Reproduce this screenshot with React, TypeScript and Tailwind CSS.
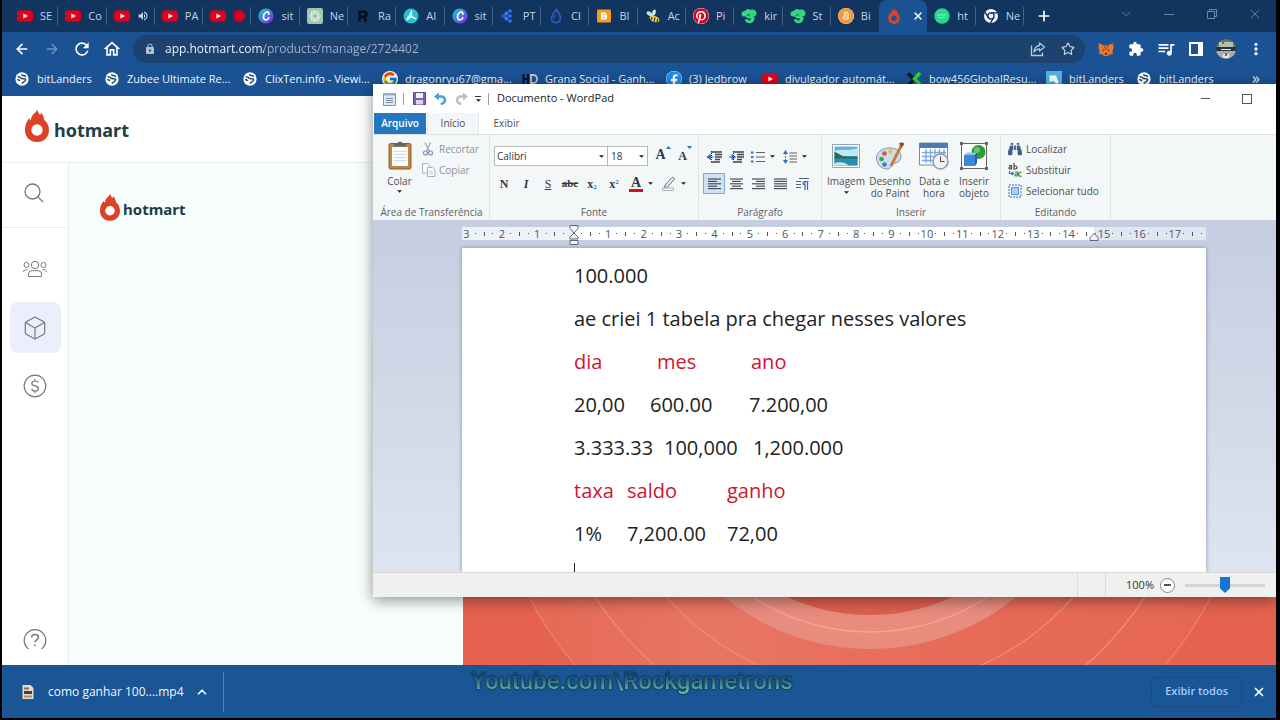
import type { ReactNode } from "react";
import clsx from "clsx";
import {
  ArrowLeft,
  ArrowRight,
  Box,
  ChevronDown,
  ChevronUp,
  MoreVertical,
  Plus,
  Star,
  X,
} from "lucide-react";
import {
  MdExtension,
  MdLock,
  MdOutlineHome,
  MdQueueMusic,
  MdRefresh,
  MdVolumeUp,
} from "react-icons/md";
import { FaBitcoin, FaBinoculars, FaFacebook, FaPinterest } from "react-icons/fa";
import { FcGoogle } from "react-icons/fc";

/* ---------- site icons ---------- */

function YoutubeIcon() {
  return (
    <svg viewBox="0 0 16 16" className="size-4 shrink-0">
      <rect y="2.5" width="16" height="11" rx="3" fill="#e3001b" />
      <path d="M6.3 5.4v5.2L11 8z" fill="#fff" />
    </svg>
  );
}

function CanvaIcon() {
  return (
    <svg viewBox="0 0 16 16" className="size-4 shrink-0">
      <defs>
        <linearGradient id="canva" x1="0" y1="0" x2="1" y2="1">
          <stop offset="0.1" stopColor="#19c5cf" />
          <stop offset="0.9" stopColor="#7d2ae8" />
        </linearGradient>
      </defs>
      <circle cx="8" cy="8" r="7.6" fill="url(#canva)" />
      <path
        d="M10.8 6.200c.3-1.500-.6-2.400-1.900-2.200-2 .3-3.500 2.800-3.400 5 .1 1.900 1.100 3 2.500 2.900 1.200-.1 2.200-1 2.800-2.100"
        fill="none"
        stroke="#fff"
        strokeWidth="1.700"
        strokeLinecap="round"
      />
    </svg>
  );
}

function ChatIcon() {
  return (
    <svg viewBox="0 0 16 16" className="size-4 shrink-0">
      <rect width="16" height="16" rx="2" fill="#9fc4ab" />
      <g fill="none" stroke="#dcefe0" strokeWidth=".900">
        <ellipse cx="8" cy="8" rx="5.500" ry="2.800" />
        <ellipse cx="8" cy="8" rx="5.500" ry="2.800" transform="rotate(60 8 8)" />
        <ellipse cx="8" cy="8" rx="5.500" ry="2.800" transform="rotate(120 8 8)" />
      </g>
    </svg>
  );
}

function LetterRIcon() {
  return (
    <svg viewBox="0 0 16 16" className="size-4 shrink-0">
      <g fill="none" stroke="#04101f" strokeWidth="2.600">
        <path d="M4.500 13.500V3.700h4.300a2.600 2.600 0 0 1 0 5.200H4.500" />
        <path d="M8.500 9l3 4.500" />
      </g>
    </svg>
  );
}

function TealIcon() {
  return (
    <svg viewBox="0 0 16 16" className="size-4 shrink-0">
      <circle cx="8" cy="8" r="7.500" fill="#22c3d6" />
      <path d="M8.500 2.500v6.200L3.500 12M8.500 8.700l4.200 2.100M8.500 3.500c-1 3-2.500 5.500-4.500 7.500" fill="none" stroke="#fff" strokeWidth="1.400" />
    </svg>
  );
}

function DotsIcon() {
  return (
    <svg viewBox="0 0 16 16" className="size-4 shrink-0">
      <path d="M1 8l5-4.500v9z" fill="#2b55d8" />
      <g fill="#3f74f5">
        <circle cx="6.500" cy="5.500" r="1.900" />
        <circle cx="6.500" cy="10.500" r="1.900" />
        <circle cx="10" cy="3" r="1.800" />
        <circle cx="10" cy="8" r="1.800" />
        <circle cx="10" cy="13" r="1.800" />
      </g>
    </svg>
  );
}

function DropIcon() {
  return (
    <svg viewBox="0 0 16 16" className="size-4 shrink-0">
      <path d="M8.500 1.500C6 5 3.500 7.400 3.500 10.200a4.500 4.500 0 0 0 9 0C12.500 7.400 10.500 5 8.500 1.500z" fill="none" stroke="#2a5cc4" strokeWidth="1.700" />
      <path d="M7.500 7c-1 1.200-2 2.200-2 3.500" fill="none" stroke="#2a5cc4" strokeWidth="1.300" />
    </svg>
  );
}

function BloggerIcon() {
  return (
    <svg viewBox="0 0 16 16" className="size-4 shrink-0">
      <rect x="1" y="1.500" width="14" height="13" rx="1.500" fill="#f39c26" />
      <path d="M5 4.500h3.500a1.800 1.800 0 0 1 1.700 2.300h.8v2.700a2 2 0 0 1-2 2H5z" fill="#fff" />
      <path d="M6.800 6.500h1.700M6.800 9.400h2.500" stroke="#f39c26" strokeWidth="1" />
    </svg>
  );
}

function BeeIcon() {
  return (
    <svg viewBox="0 0 16 16" className="size-4 shrink-0">
      <ellipse cx="5" cy="6" rx="3.800" ry="2" transform="rotate(30 5 6)" fill="#bfe0ee" />
      <ellipse cx="9" cy="4.500" rx="1.700" ry="3" transform="rotate(15 9 4.500)" fill="#d9eef5" />
      <ellipse cx="9.500" cy="11" rx="5" ry="3" transform="rotate(20 9.500 11)" fill="#f0d24a" />
      <path d="M7 9l-1 3M10 9.500l-1 4M12.800 11l-1 3" stroke="#2b3a3c" strokeWidth="1.200" />
    </svg>
  );
}

function GreenCloudIcon() {
  return (
    <svg viewBox="0 0 16 16" className="size-4 shrink-0">
      <path
        d="M.5 6C.5 3.500 2.500 2.500 4 3 5 1 8 .3 9.500 2 12.600.7 15.700 2.800 15.500 5.800c-.2 2-2 2.700-3.500 2.500l1.600 1c-.1 3.800-1.700 6-5 6-2.800 0-4.600-1.500-4.700-4h3.100c.2 1 .7 1.400 1.500 1.300 1-.1 1.400-1.100 1.300-2.300-1.700.4-4.300-.2-4.800-1.900C3 8.800.5 8.500.5 6z"
        fill="#37d67c"
      />
      <path d="M6 8c.5-1.200 2-1.500 3-1" fill="none" stroke="#12355f" strokeWidth=".900" />
    </svg>
  );
}

function FlameIcon({ className, hole = "#fff" }: { className?: string; hole?: string }) {
  return (
    <svg viewBox="0 0 24 33" className={clsx("shrink-0", className)}>
      <path
        d="M12.200 0c.4 3 1.600 4.600 3.100 6 .5-1 .6-1.700.5-2.700 2.300 2.500 2.900 5 3.600 7.600 2.600 2.300 4.600 5.600 4.600 10C24 28 18.900 33 12 33S0 28 0 21.200C0 15.500 1.800 12.600 4.400 9.300c.3 1 .7 1.600 1.400 2C6.200 7 8.500 4.800 10.300 3.500 11.300 2.700 11.900 1.600 12.200 0z"
        fill="#dc4228"
      />
      <circle cx="12" cy="21" r="5.700" fill={hole} />
    </svg>
  );
}

function MessageIcon() {
  return (
    <svg viewBox="0 0 16 16" className="size-4 shrink-0">
      <circle cx="8" cy="8" r="7.700" fill="#27d98b" />
      <path d="M3.500 7h9M4.500 9.500h7" stroke="#c9f7e0" strokeWidth="1" strokeDasharray="2 1" />
    </svg>
  );
}

function ChromeIcon() {
  return (
    <svg viewBox="0 0 16 16" className="size-4 shrink-0">
      <circle cx="8" cy="8" r="7" fill="#f1f5fa" />
      <circle cx="8" cy="8" r="3.100" fill="#f1f5fa" stroke="#12355f" strokeWidth="1.300" />
      <path d="M8 4.900h6.300M5.300 9.600L2.100 4.200M10.700 9.600l-3.200 5.300" stroke="#12355f" strokeWidth="1.300" />
    </svg>
  );
}

function GlobeIcon() {
  return (
    <svg viewBox="0 0 16 16" className="size-[14px] shrink-0">
      <circle cx="8" cy="8" r="7.600" fill="#fff" />
      <path d="M3 5.500c2-.2 3 .3 3.500 1.300s2.500 1 3.800.9c1.300-.2 2.200.6 1.700 1.700-.6 1.500-2.500 2-4.300 3.600M8 2.300c-.6 1 .5 1.800 1.500 1.800s2 .4 2.900 1.400M2.500 8.500c1 .3 2.500.5 3 1.700" fill="none" stroke="#1d4a80" strokeWidth="1.700" />
    </svg>
  );
}

function HdIcon() {
  return (
    <svg viewBox="0 0 16 16" className="size-4 shrink-0">
      <path d="M1.500 3v10M6 3v10M1.500 8H6" stroke="#0a1526" strokeWidth="2.200" />
      <path d="M9 4v8h2.200a4 4 0 0 0 0-8z" fill="none" stroke="#b7c7da" strokeWidth="1.800" />
    </svg>
  );
}

function CrossIcon() {
  return (
    <svg viewBox="0 0 16 16" className="size-4 shrink-0">
      <path d="M2 2.500L8 8l-5 6" fill="none" stroke="#081a16" strokeWidth="3.500" />
      <path d="M14 2L8.500 8l5.500 5" fill="none" stroke="#2fd04b" strokeWidth="3.500" />
    </svg>
  );
}

function CursorIcon() {
  return (
    <svg viewBox="0 0 16 16" className="size-4 shrink-0">
      <rect width="16" height="16" fill="#4fb3e4" />
      <path d="M3.500 4.500h7v2L13 11l-2.500 2L7.500 10 3.500 11z" fill="#fff" />
    </svg>
  );
}

function FoxIcon() {
  return (
    <svg viewBox="0 0 16 16" className="size-4">
      <path d="M1 2l5 2.500h4L15 2l.5 5-1 3 .5 3-3.500.5L10 15H6l-1.500-1.500L1 13l.5-3-1-3z" fill="#e8792b" />
      <path d="M5 8l1.500 1.500L4.500 10zM11 8L9.500 9.500l2 .5zM6.500 12h3l-.5 1.500H7z" fill="#4a2b1d" />
      <path d="M6 4.500L8 9l2-4.500" fill="none" stroke="#a54a17" />
    </svg>
  );
}

type Tab = { icon: ReactNode; title?: string; extra?: ReactNode; active?: boolean };

const tabs: Tab[] = [
  { icon: <YoutubeIcon />, title: "SE" },
  { icon: <YoutubeIcon />, title: "Co" },
  { icon: <YoutubeIcon />, extra: <MdVolumeUp className="size-3" /> },
  { icon: <YoutubeIcon />, title: "PA" },
  { icon: <YoutubeIcon />, extra: <span className="block size-3 rounded-full bg-[#d4001d]" /> },
  { icon: <CanvaIcon />, title: "sit" },
  { icon: <ChatIcon />, title: "Ne" },
  { icon: <LetterRIcon />, title: "Ra" },
  { icon: <TealIcon />, title: "AI" },
  { icon: <CanvaIcon />, title: "sit" },
  { icon: <DotsIcon />, title: "PT" },
  { icon: <DropIcon />, title: "Cl" },
  { icon: <BloggerIcon />, title: "Bl" },
  { icon: <BeeIcon />, title: "Ac" },
  { icon: <FaPinterest className="size-4 shrink-0 rounded-full bg-white text-[#d9001f]" />, title: "Pi" },
  { icon: <GreenCloudIcon />, title: "kir" },
  { icon: <GreenCloudIcon />, title: "St" },
  { icon: <FaBitcoin className="size-4 shrink-0 rounded-full bg-[#fbe6c8] text-[#f2973a]" />, title: "Bi" },
  { icon: <FlameIcon className="h-4 w-3" hole="#1a5294" />, active: true },
  { icon: <MessageIcon />, title: "ht" },
  { icon: <ChromeIcon />, title: "Ne" },
];

const bookmarks = [
  { icon: <GlobeIcon />, label: "bitLanders", width: "w-[90px]" },
  { icon: <GlobeIcon />, label: "Zubee Ultimate Re...", width: "w-[138px]" },
  { icon: <GlobeIcon />, label: "ClixTen.info - Viewi...", width: "w-[140px]" },
  { icon: <FcGoogle className="size-4 shrink-0 rounded-full bg-white" />, label: "dragonryu67@gma...", width: "w-[140px]" },
  { icon: <HdIcon />, label: "Grana Social - Ganh...", width: "w-[144px]" },
  { icon: <FaFacebook className="size-4 shrink-0 rounded-full bg-white text-[#1b8df0]" />, label: "(3) Jedbrow", width: "w-[96px]" },
  { icon: <YoutubeIcon />, label: "divulgador automát...", width: "w-[144px]" },
  { icon: <CrossIcon />, label: "bow456GlobalResu...", width: "w-[140px]" },
  { icon: <CursorIcon />, label: "bitLanders", width: "w-[90px]" },
  { icon: <GlobeIcon />, label: "bitLanders", width: "w-[90px]" },
];

function TabStrip() {
  return (
    <div className="flex h-8 bg-[#12355f] pl-2">
      <div className="flex min-w-0 flex-1" role="tablist">
        {tabs.map((tab, i) => (
          <button
            key={i}
            role="tab"
            aria-selected={!!tab.active}
            aria-label={tab.title ?? "Hotmart"}
            className={clsx(
              "flex min-w-0 flex-1 items-center pl-[7px] text-[11px] text-[#c3d3e6]",
              tab.active && "rounded-t-lg bg-[#1a5294]",
            )}
          >
            <span className="flex w-4 shrink-0 justify-center">{tab.icon}</span>
            <span className="ml-[7px] w-4 whitespace-nowrap text-left">
              {tab.active ? <X className="ml-[3px] size-3 text-white" strokeWidth={3} /> : tab.extra ?? tab.title}
            </span>
            {!tab.active && tabs[i + 1]?.active !== true && (
              <span className="ml-auto h-[18px] w-px bg-[#45638a]" />
            )}
          </button>
        ))}
      </div>
      <div className="flex w-[252px] shrink-0 items-center pl-3">
        <button aria-label="Nova guia" className="text-white">
          <Plus className="size-4" strokeWidth={2.5} />
        </button>
        <div className="ml-auto flex items-center pb-1 text-[#6f88a8]">
          <button aria-label="Pesquisar guias" className="flex w-[43px] justify-center">
            <ChevronDown className="size-[14px]" strokeWidth={1.5} />
          </button>
          <button aria-label="Minimizar" className="flex w-[43px] justify-center">
            <span className="h-px w-[10px] bg-[#6f88a8]" />
          </button>
          <button aria-label="Restaurar" className="flex w-[43px] justify-center">
            <svg viewBox="0 0 10 10" className="size-[10px]" fill="none" stroke="currentColor">
              <path d="M.5 2.500h7v7h-7zM2.500 2.500v-2h7v7h-2" />
            </svg>
          </button>
          <button aria-label="Fechar" className="flex w-[43px] justify-center">
            <X className="size-4" strokeWidth={1.3} />
          </button>
        </div>
      </div>
    </div>
  );
}

function ToolButton({ label, children, className }: { label: string; children: ReactNode; className?: string }) {
  return (
    <button aria-label={label} className={clsx("flex w-[30px] shrink-0 items-center justify-center", className)}>
      {children}
    </button>
  );
}

function Toolbar() {
  return (
    <div className="flex h-[33px] items-center bg-[#1a5294] px-[5px] text-white">
      <ToolButton label="Voltar"><ArrowLeft className="size-4" strokeWidth={2.5} /></ToolButton>
      <ToolButton label="Avançar" className="text-[#7396c2]"><ArrowRight className="size-4" strokeWidth={2} /></ToolButton>
      <ToolButton label="Recarregar"><MdRefresh className="size-5" /></ToolButton>
      <ToolButton label="Página inicial"><MdOutlineHome className="size-5" /></ToolButton>
      <div className="ml-[6px] flex h-7 min-w-0 flex-1 items-center rounded-full bg-[#1c426f] pl-[11px] pr-[2px]">
        <MdLock className="size-3 shrink-0 text-[#b4c0d0]" />
        <input
          type="text"
          aria-label="Endereço"
          defaultValue="app.hotmart.com/products/manage/2724402"
          className="ml-[9px] min-w-0 flex-1 bg-[linear-gradient(90deg,#fff_99px,#9fb4cf_99px)] bg-clip-text text-xs font-medium text-transparent outline-none"
        />
        <ToolButton label="Compartilhar" className="text-[#b9c8da]">
          <svg viewBox="0 0 16 16" className="size-4" fill="none" stroke="currentColor" strokeWidth="1.300">
            <path d="M1.500 4.500v10h11v-3" />
            <path d="M9.500 2l5 4-5 4V7.800C7 7.800 5.300 8.800 4 11c.2-3.500 2-6 5.500-6.500z" strokeLinejoin="round" />
          </svg>
        </ToolButton>
        <ToolButton label="Favoritar" className="text-[#c9d5e4]"><Star className="size-[14px]" /></ToolButton>
      </div>
      <div className="ml-[6px] flex">
        <ToolButton label="Carteira"><FoxIcon /></ToolButton>
        <ToolButton label="Extensões"><MdExtension className="size-4" /></ToolButton>
        <ToolButton label="Mídia"><MdQueueMusic className="size-5" /></ToolButton>
        <ToolButton label="Painel lateral">
          <svg viewBox="0 0 14 14" className="size-[14px]">
            <path d="M1 1h12v12H1z" fill="none" stroke="#fff" strokeWidth="2" />
            <path d="M9 1h4v12H9z" fill="#fff" />
          </svg>
        </ToolButton>
        <ToolButton label="Perfil">
          <svg viewBox="0 0 20 20" className="size-5 rounded-full">
            <path fill="#5f7d5e" d="M0 0h20v8H0z" />
            <path fill="#b5bfae" d="M3 3h14v5H3z" />
            <path fill="#27323c" d="M0 8h20v4H0z" />
            <path fill="#a7aeb0" d="M0 12h20v8H0z" />
            <path fill="#e9e3dc" d="M5 10h10v1H5zM7 15h6v4H7z" />
            <path fill="#a4503c" d="M9 14h2v3H9zM6 3h2v2H6z" />
          </svg>
        </ToolButton>
        <ToolButton label="Menu"><MoreVertical className="size-4" strokeWidth={3} /></ToolButton>
      </div>
    </div>
  );
}

function BookmarksBar() {
  return (
    <div className="flex h-[31px] items-start overflow-hidden bg-[#1a5294] pl-3 pt-[6px] text-[11px] leading-4 text-[#f0f5fb]">
      {bookmarks.map((b, i) => (
        <a key={i} href="#" className={clsx("flex shrink-0 items-center gap-[7px] whitespace-nowrap", b.width)}>
          <span className="flex w-4 shrink-0 justify-center">{b.icon}</span>
          {b.label}
        </a>
      ))}
      <button aria-label="Mais favoritos" className="ml-auto mr-4 text-base leading-[14px]">
        »
      </button>
    </div>
  );
}

/* ---------- hotmart page ---------- */

function Logo({ small }: { small?: boolean }) {
  return (
    <div className={clsx("flex items-end", small ? "gap-[3px]" : "gap-[5px]")}>
      <FlameIcon className={small ? "h-7 w-5" : "h-[33px] w-6"} />
      <span
        className={clsx(
          "font-['Noto_Sans',sans-serif] leading-6 font-bold text-[#1d3f45]",
          small ? "text-[15px]" : "text-lg",
        )}
      >
        hotmart
      </span>
    </div>
  );
}

function Sidebar() {
  return (
    <nav className="flex w-[67px] shrink-0 flex-col items-center border-r border-[#e6eded] bg-white text-[#74797d]">
      <button aria-label="Buscar" className="flex h-[65px] w-full shrink-0 items-center justify-center border-b border-[#e8eeee] pb-1 pr-[2px]">
        <svg viewBox="0 0 20 20" className="size-5" fill="none" stroke="currentColor" strokeWidth="1.300">
          <circle cx="8.500" cy="8.500" r="7.500" />
          <path d="M14 14l5 5" />
        </svg>
      </button>
      <a href="#" aria-label="Comunidade" className="mt-[15px] flex size-[51px] items-center justify-center rounded-lg">
        <svg viewBox="0 0 24 18" className="h-[18px] w-6" fill="none" stroke="currentColor" strokeWidth="1">
          <circle cx="12" cy="5" r="3.700" />
          <circle cx="3.500" cy="5" r="2.500" />
          <circle cx="20.500" cy="5" r="2.500" />
          <path d="M5.500 16.500v-2.500a3.300 3.300 0 0 1 3.300-3.300h6.400a3.300 3.300 0 0 1 3.300 3.300v2.500zM.6 12c0-1.800 1.300-2.400 4-2.400M23.400 12c0-1.800-1.300-2.400-4-2.400" />
        </svg>
      </a>
      <a href="#" aria-label="Produtos" className="mt-2 flex size-[51px] items-center justify-center rounded-lg bg-[#eceefc]">
        <Box className="size-[26px]" strokeWidth={1.1} />
      </a>
      <a href="#" aria-label="Finanças" className="mt-[7px] flex size-[51px] items-center justify-center rounded-lg">
        <svg viewBox="0 0 24 24" className="size-6" fill="none" stroke="currentColor" strokeWidth="1.200">
          <circle cx="12" cy="12" r="10.800" />
          <path d="M15.300 8.800c-.4-1.200-1.600-1.800-3.200-1.800-1.900 0-3.300.9-3.300 2.400 0 3.400 6.700 1.700 6.700 5.200 0 1.500-1.400 2.500-3.400 2.500-1.800 0-3.100-.8-3.500-2.100M12 5v2M12 17v2" />
        </svg>
      </a>
      <a href="#" aria-label="Ajuda" className="mt-auto mb-4 h-5">
        <svg viewBox="0 0 24 20" className="h-5 w-6" fill="none" stroke="currentColor" strokeWidth="1.200">
          <circle cx="12" cy="11.500" r="10.800" />
          <path d="M8.500 8.500c.2-1.900 1.600-3 3.500-3s3.500 1 3.500 2.800c0 2.200-3.500 2.400-3.500 5M12 15.500v1.800" strokeWidth="1.600" />
        </svg>
      </a>
    </nav>
  );
}

function HeroRings() {
  return (
    <svg viewBox="0 0 813 502" preserveAspectRatio="xMidYMid slice" className="h-full w-full">
      <defs>
        <linearGradient id="glow" x1="0" x2="1">
          <stop offset="0" stopColor="#fff" stopOpacity=".02" />
          <stop offset=".3" stopColor="#fff" stopOpacity=".12" />
          <stop offset=".6" stopColor="#fff" stopOpacity=".06" />
          <stop offset="1" stopColor="#fff" stopOpacity=".02" />
        </linearGradient>
      </defs>
      <rect width="813" height="502" fill="#e5634e" />
      <circle cx="407" cy="255" r="385" fill="url(#glow)" />
      <g fill="none" stroke="#f08c78" strokeWidth="1.300">
        <circle cx="407" cy="255" r="271" />
        <circle cx="407" cy="255" r="328" />
        <circle cx="407" cy="255" r="385" strokeOpacity=".7" />
        <circle cx="407" cy="255" r="214" stroke="#e88c7e" strokeWidth="34" />
        <circle cx="407" cy="255" r="214" stroke="#f3a697" />
      </g>
      <circle cx="407" cy="255" r="197" fill="#dd604c" />
    </svg>
  );
}

function HotmartPage() {
  return (
    <div className="flex flex-1 flex-col bg-white">
      <header className="flex h-[67px] items-center border-b border-[#e6eded] pb-[7px] pl-[23px]">
        <Logo />
      </header>
      <div className="flex flex-1">
        <Sidebar />
        <main className="w-[394px] shrink-0 bg-[#f8fefe] pl-[31px] pt-[30px]">
          <Logo small />
        </main>
        <aside className="relative min-w-0 flex-1">
          <div className="absolute inset-0">
            <HeroRings />
          </div>
        </aside>
      </div>
    </div>
  );
}

function DownloadBar() {
  return (
    <footer className="flex h-[53px] items-center bg-[#1a5596] text-xs text-[#f0f5fb]">
      <a href="#" className="flex h-10 w-[222px] items-center border-r border-[#5b84b6] pl-[19px]">
        <svg viewBox="0 0 14 16" className="h-4 w-[14px]">
          <path d="M1.500 1h8l3 3v11h-11z" fill="#e2dccd" />
          <path d="M3 3.500h5v2H3z" fill="#8d6a52" />
          <path d="M3 7h8v3H3z" fill="#40403f" />
          <path d="M3 11.500h8v2H3z" fill="#b58964" />
        </svg>
        <span className="ml-[13px] whitespace-nowrap">como ganhar 100....mp4</span>
        <ChevronUp className="mr-[14px] ml-auto size-[14px]" strokeWidth={3} />
      </a>
      <button className="ml-auto h-[30px] rounded-sm border border-[#1d4a85] px-[13px] text-[11px] font-semibold text-[#a9c9fb]">
        Exibir todos
      </button>
      <button aria-label="Fechar downloads" className="mx-[10px]">
        <X className="size-[14px] text-white" strokeWidth={3} />
      </button>
    </footer>
  );
}

/* ---------- wordpad ---------- */

function Caret() {
  return (
    <svg viewBox="0 0 6 3" className="h-[3px] w-[5px] shrink-0">
      <path d="M0 0h6L3 3z" fill="#222" />
    </svg>
  );
}

function RibbonGroup({ label, width, children }: { label: string; width: string; children: ReactNode }) {
  return (
    <section className={clsx("flex shrink-0 flex-col border-r border-[#dfe4e6]", width)}>
      <div className="min-h-0 flex-1">{children}</div>
      <h2 className="pb-px text-center leading-[14px] text-[#5c6164]">{label}</h2>
    </section>
  );
}

function FmtButton({ label, wide, on, children }: { label: string; wide?: boolean; on?: boolean; children: ReactNode }) {
  return (
    <button
      aria-label={label}
      className={clsx(
        "flex h-[21px] items-center justify-center gap-[5px]",
        wide ? "w-8" : "w-[22px]",
        on && "border border-[#7fa9dc] bg-[#cfe0f5]",
      )}
    >
      {children}
    </button>
  );
}

function Lines({ rows }: { rows: [number, number][] }) {
  return (
    <svg viewBox="0 0 13 12" className="h-3 w-[13px]" stroke="#4a4e55" strokeWidth="1.200">
      {rows.map(([x1, x2], i) => (
        <path key={i} d={`M${x1} ${i * 2.4 + 1}H${x2}`} />
      ))}
    </svg>
  );
}

function Indent({ flip }: { flip?: boolean }) {
  return (
    <svg viewBox="0 0 15 12" className="h-3 w-[15px]">
      <path d="M4 1h11M8 3.500h7M8 6h7M8 8.500h5M4 11h9" stroke="#3e4249" strokeWidth="1.300" />
      <path d={flip ? "M0 6h3M3 3.500v5L6.500 6z" : "M6.500 6h-3M3.500 3.500v5L0 6z"} fill="#2f6fc4" stroke="#2f6fc4" />
      <path d="M4.500 0v12" stroke="#333" strokeDasharray="1 1" />
    </svg>
  );
}

function PasteIcon() {
  return (
    <svg viewBox="0 0 24 29" className="h-[29px] w-6">
      <rect x="1" y="2.500" width="22" height="25.500" rx="1.500" fill="#c08447" stroke="#8d5c2b" />
      <path d="M4 6h16v19H4z" fill="#fbfcfd" />
      <path d="M5.500 10.500h13M5.500 13.500h13M5.500 16.500h13M5.500 19.500h13" stroke="#d3dae3" />
      <path d="M6 5.500V3h3.500a2.500 2.500 0 0 1 5 0H18v2.500z" fill="#5f666c" />
    </svg>
  );
}

function CutIcon() {
  return (
    <svg viewBox="0 0 12 14" className="h-[14px] w-3" fill="none">
      <path d="M3 .5l4.500 9M8.500 .5L4.500 9" stroke="#a3a8b2" strokeWidth="1.300" />
      <circle cx="3.500" cy="11" r="2" stroke="#8f86c0" strokeWidth="1.200" />
      <circle cx="8.500" cy="11" r="2" stroke="#8f86c0" strokeWidth="1.200" />
    </svg>
  );
}

function CopyIcon() {
  return (
    <svg viewBox="0 0 14 14" className="size-[14px]" fill="#f8fafc" stroke="#a3b0c2">
      <path d="M.5 .5h5l2.500 2.500v7h-7.500z" />
      <path d="M5.500 4.500h5l2.500 2.500v6.500H5.500z" />
      <path d="M7 8.500h4M7 10.500h4" stroke="#c3ccd8" />
    </svg>
  );
}

function PictureIcon() {
  return (
    <svg viewBox="0 0 28 28" className="size-7">
      <path d="M.5 2.500h27v23H.5z" fill="#fff" stroke="#9aa3ab" />
      <path d="M2.500 4.500h23v19h-23z" fill="#5fb3e2" />
      <path d="M2.500 9c8-3 15 1 23-3v8h-23z" fill="#c2e6f3" />
      <path d="M2.500 10c3 0 5 4 11 4.500h12v3h-23z" fill="#1e6f57" />
      <path d="M2.500 16.500h23v7h-23z" fill="#2a8eb2" />
      <path d="M2.500 21c6-2 12 0 14 2.500h-14z" fill="#cfe9df" />
    </svg>
  );
}

function PaletteIcon() {
  return (
    <svg viewBox="0 0 30 28" className="h-7 w-[30px]">
      <path d="M2 19C-1 11 8 5 16 6c8 .8 12 6 9 12-2 4-6 2-8 4s0 5-5 5C7 27 3 23.500 2 19z" fill="#cfdcec" stroke="#7f98b8" />
      <circle cx="6.500" cy="17" r="2.300" fill="#3f9d4b" />
      <circle cx="9.500" cy="11.500" r="2.300" fill="#d5533b" />
      <circle cx="15.500" cy="9.500" r="2.300" fill="#ecc534" />
      <circle cx="9.500" cy="22.500" r="2.200" fill="#3d7bd0" />
      <path d="M27.500 1L16 24" stroke="#c57b41" strokeWidth="2.800" />
      <path d="M24 1.500c2-1.500 4-1 5.500.5l-3 4z" fill="#8d5130" />
    </svg>
  );
}

function DateIcon() {
  return (
    <svg viewBox="0 0 30 28" className="h-7 w-[30px]">
      <path d="M.5 1h28v22H.5z" fill="#fff" stroke="#7a8ca5" />
      <path d="M.5 1h28v5H.5z" fill="#4d79b0" />
      <path d="M3 10.500h24M3 14.500h24M3 18.500h24M7 7v14M11.500 7v14M16 7v14M20.500 7v14M25 7v14" stroke="#79a7e0" strokeWidth="1.300" />
      <circle cx="21.500" cy="19.500" r="7.500" fill="#f1f4f7" stroke="#929aa3" strokeWidth="1.500" />
      <path d="M21.500 14.500v5h4" fill="none" stroke="#444" />
    </svg>
  );
}

function ObjectIcon() {
  return (
    <svg viewBox="0 0 28 28" className="size-7">
      <path d="M1.500 1.500h25v25h-25z" fill="#fff" stroke="#666" />
      <path d="M0 0h3v3H0zM25 0h3v3h-3zM0 25h3v3H0zM25 25h3v3h-3z" fill="#666" />
      <circle cx="18.500" cy="10" r="7" fill="#2e9b35" />
      <circle cx="17" cy="8" r="3" fill="#6cc56b" />
      <path d="M4 13l3-2.500h10L15 13z" fill="#8fc1f2" />
      <path d="M4 13h11v11H4z" fill="#3f86db" />
      <path d="M15 13l2-2.500V21l-2 3z" fill="#2560ad" />
    </svg>
  );
}

const inserts = [
  { icon: <PictureIcon />, lines: ["Imagem"], caret: true, width: "w-11" },
  { icon: <PaletteIcon />, lines: ["Desenho", "do Paint"], width: "w-11" },
  { icon: <DateIcon />, lines: ["Data e", "hora"], width: "w-11" },
  { icon: <ObjectIcon />, lines: ["Inserir", "objeto"], width: "w-9" },
];

function Ribbon() {
  return (
    <div className="flex h-[86px] overflow-hidden border-t border-[#dde2e4] bg-[#f4f7f8] pl-px text-[10px] leading-3 text-[#4a4f52]">
      <RibbonGroup label="Área de Transferência" width="w-[116px]">
        <div className="flex pt-[5px] pl-[10px]">
          <button className="flex w-[31px] flex-col items-center pt-px">
            <PasteIcon />
            <span className="mt-1 leading-[14px]">Colar</span>
            <span className="pt-[2px]"><Caret /></span>
          </button>
          <div className="ml-[7px] flex flex-col text-[#8d9296]">
            <button className="flex h-[17px] items-center gap-[5px]">
              <CutIcon /> Recortar
            </button>
            <button className="mt-1 flex h-[17px] items-center gap-[3px]">
              <CopyIcon /> Copiar
            </button>
          </div>
        </div>
      </RibbonGroup>

      <RibbonGroup label="Fonte" width="w-[209px]">
        <div className="flex items-center pt-[11px] pl-1">
          <span className="relative flex items-center">
            <select aria-label="Fonte" className="h-5 w-[114px] appearance-none border border-[#b5babd] bg-white pl-[2px] text-[#333]">
              <option>Calibri</option>
            </select>
            <span className="pointer-events-none absolute right-1"><Caret /></span>
          </span>
          <span className="relative flex items-center">
            <select aria-label="Tamanho da fonte" className="h-5 w-10 appearance-none border border-l-0 border-[#b5babd] bg-white pl-[3px] text-[#333]">
              <option>18</option>
            </select>
            <span className="pointer-events-none absolute right-1"><Caret /></span>
          </span>
          <div className="ml-1 flex font-['Liberation_Serif',serif] font-bold text-[#2f3a48]">
            <button aria-label="Aumentar fonte" className="flex w-[22px] items-start justify-center">
              <span className="text-sm leading-[18px]">A</span>
              <svg viewBox="0 0 5 3" className="h-[3px] w-[5px]"><path d="M0 3h5L2.500 0z" fill="#2f6fc4" /></svg>
            </button>
            <button aria-label="Reduzir fonte" className="flex w-[22px] items-start justify-center">
              <span className="text-xs leading-5">A</span>
              <svg viewBox="0 0 5 3" className="h-[3px] w-[5px]"><path d="M0 0h5L2.500 3z" fill="#2f6fc4" /></svg>
            </button>
          </div>
        </div>
        <div className="flex items-center pt-[7px] pl-[3px] font-['Liberation_Serif',serif] text-xs font-bold text-[#33383f]">
          <FmtButton label="Negrito">N</FmtButton>
          <FmtButton label="Itálico"><i>I</i></FmtButton>
          <FmtButton label="Sublinhado"><span className="font-normal underline">S</span></FmtButton>
          <FmtButton label="Tachado"><span className="text-[11px] line-through">abc</span></FmtButton>
          <FmtButton label="Subscrito"><span>x<sub className="text-[7px] text-[#2f6fc4]">2</sub></span></FmtButton>
          <FmtButton label="Sobrescrito"><span>x<sup className="text-[7px] text-[#2f6fc4]">2</sup></span></FmtButton>
          <FmtButton label="Cor do texto" wide>
            <span className="border-b-[3px] border-[#d40f22] px-[2px] text-sm leading-[13px]">A</span>
            <Caret />
          </FmtButton>
          <FmtButton label="Realce" wide>
            <svg viewBox="0 0 15 15" className="size-[15px]" fill="none" stroke="#6d747c">
              <path d="M4 9l7-7.500c1-.8 3 .8 2.200 2L6.500 11 3.500 11.500z" fill="#e5ebf2" />
              <path d="M1.500 12h11v2.500h-11z" fill="#fff" stroke="#a5abb1" />
            </svg>
            <Caret />
          </FmtButton>
        </div>
      </RibbonGroup>

      <RibbonGroup label="Parágrafo" width="w-[123px]">
        <div className="flex items-center pt-[11px] pl-1">
          <FmtButton label="Diminuir recuo"><Indent /></FmtButton>
          <FmtButton label="Aumentar recuo"><Indent flip /></FmtButton>
          <FmtButton label="Iniciar uma lista" wide>
            <svg viewBox="0 0 14 12" className="h-3 w-[14px]">
              <path d="M0 1.500h2.500M0 6h2.500M0 10.500h2.500" stroke="#2f6fc4" strokeWidth="2.200" />
              <path d="M5 1.500h9M5 6h9M5 10.500h9" stroke="#5b6067" strokeWidth="1.200" />
            </svg>
            <Caret />
          </FmtButton>
          <FmtButton label="Espaçamento entre linhas" wide>
            <svg viewBox="0 0 14 14" className="size-[14px]">
              <path d="M2.500 3v8" stroke="#2f6fc4" strokeDasharray="2 1" />
              <path d="M0 4h5L2.500 0zM0 10h5l-2.500 4z" fill="#2f6fc4" />
              <path d="M6.500 3H14M6.500 6H14M6.500 9H14M6.500 12H14" stroke="#5b6067" strokeWidth="1.200" />
            </svg>
            <Caret />
          </FmtButton>
        </div>
        <div className="flex items-center pt-[6px] pl-1">
          <FmtButton label="Alinhar à esquerda" on><Lines rows={[[0, 13], [0, 9], [0, 13], [0, 9], [0, 13]]} /></FmtButton>
          <FmtButton label="Centralizar"><Lines rows={[[0, 13], [2, 11], [0, 13], [2, 11], [0, 13]]} /></FmtButton>
          <FmtButton label="Alinhar à direita"><Lines rows={[[0, 13], [4, 13], [0, 13], [4, 13], [0, 13]]} /></FmtButton>
          <FmtButton label="Justificar"><Lines rows={[[0, 13], [0, 13], [0, 13], [0, 13], [0, 13]]} /></FmtButton>
          <FmtButton label="Parágrafo">
            <svg viewBox="0 0 13 13" className="size-[13px]" fill="none" stroke="#5b6067">
              <path d="M3 1.500h10M0 4.500h5M0 7.500h5M0 10.500h5" />
              <path d="M12.500 4.500H8.500a1.800 1.800 0 0 0 0 3.500M9 4.500V13M11.500 4.500V13" stroke="#2f6fc4" strokeWidth="1.200" />
            </svg>
          </FmtButton>
        </div>
      </RibbonGroup>

      <RibbonGroup label="Inserir" width="w-[179px]">
        <div className="flex items-start pt-[7px] pl-[2px]">
          {inserts.map((it) => (
            <button key={it.lines[0]} className={clsx("flex flex-col items-center whitespace-nowrap", it.width)}>
              {it.icon}
              <span className="mt-[5px]">{it.lines[0]}</span>
              {it.caret ? <span className="pt-1"><Caret /></span> : <span>{it.lines[1]}</span>}
            </button>
          ))}
        </div>
      </RibbonGroup>

      <RibbonGroup label="Editando" width="w-[110px]">
        <div className="flex flex-col gap-1 pt-[5px] pl-[7px]">
          <button className="flex h-[17px] items-center gap-1 whitespace-nowrap">
            <FaBinoculars className="size-[14px] text-[#3f5f8d]" /> Localizar
          </button>
          <button className="flex h-[17px] items-center gap-1 whitespace-nowrap">
            <svg viewBox="0 0 14 14" className="size-[14px]" fill="none" strokeWidth="1.200">
              <path d="M1 2.500h2.500V6H2a1 1 0 0 1 0-2h1.500M6 0v6h1.500a1.500 1.500 0 0 0 0-3H6" stroke="#444" />
              <path d="M1.500 8v2.500H5M3.500 9l2 1.500-2 1.500" stroke="#2f6fc4" />
              <path d="M7 9h2.500v4H8a1 1 0 0 1 0-2h1.500M13.500 9.500A2 2 0 1 0 13.500 13" stroke="#3c8f3f" />
            </svg>
            Substituir
          </button>
          <button className="flex h-[17px] items-center gap-1 whitespace-nowrap">
            <svg viewBox="0 0 14 14" className="size-[14px]">
              <path d="M1 1h12v12H1z" fill="none" stroke="#2f6fc4" strokeDasharray="2 1" />
              <path d="M3.500 3.500h7v7h-7z" fill="#a9cdf3" stroke="#5b93d6" />
            </svg>
            Selecionar tudo
          </button>
        </div>
      </RibbonGroup>
    </div>
  );
}

const marks = ["3", "2", "1", "", ...Array.from({ length: 17 }, (_, i) => String(i + 1))];

function Ruler() {
  return (
    <div className="relative flex h-[13px] bg-[linear-gradient(90deg,#eef1f6_15%,#fff_15%,#fff_85%,#e1e7f0_85%)] text-[11px] leading-[13px] text-[#4c5663]">
      {marks.map((m, i) => (
        <div key={i} className="grid min-w-0 flex-1 grid-cols-4 items-center">
          <span className="flex justify-center">{m}</span>
          <span className="mx-auto size-px bg-[#4c5663]" />
          <span className="mx-auto h-1 w-px bg-[#4c5663]" />
          <span className="mx-auto size-px bg-[#4c5663]" />
        </div>
      ))}
      <svg viewBox="0 0 10 20" className="absolute -top-[2px] left-[15%] h-5 w-[10px] -translate-x-1/2" fill="#f4f6f9" stroke="#5f6872">
        <path d="M1 .5h8v3L5 8 1 3.500zM5 8l4 4v2H1v-2zM1 15.500h8v4H1z" />
      </svg>
      <svg viewBox="0 0 10 8" className="absolute top-[6px] left-[85%] h-2 w-[10px] -translate-x-1/2" fill="#f4f6f9" stroke="#5f6872">
        <path d="M5 .5l4 4v3H1v-3z" />
      </svg>
    </div>
  );
}

type Row = { cells: string[]; widths: string[]; red?: boolean };

const rows: Row[] = [
  { cells: ["dia", "mes", "ano"], widths: ["w-[83px]", "w-[94px]"], red: true },
  { cells: ["20,00", "600.00", "7.200,00"], widths: ["w-[76px]", "w-[99px]"] },
  { cells: ["3.333.33", "100,000", "1,200.000"], widths: ["w-[90px]", "w-[89px]"] },
  { cells: ["taxa", "saldo", "ganho"], widths: ["w-[53px]", "w-[100px]"], red: true },
  { cells: ["1%", "7,200.00", "72,00"], widths: ["w-[53px]", "w-[100px]"] },
];

function WordPad() {
  return (
    <div className="absolute top-[84px] right-1 bottom-[123px] left-[373px] flex flex-col overflow-hidden bg-white shadow-[0_3px_14px_rgba(0,0,0,0.45)]">
      <div className="flex h-[29px] shrink-0 items-center pl-[10px] text-[11px] text-[#222]">
        <svg viewBox="0 0 13 14" className="h-[14px] w-[13px]">
          <path d="M.5 1.500h12v12H.5z" fill="#dfe9f3" stroke="#7d93ad" />
          <path d="M1 1h11v2.500H1z" fill="#8fb0d2" />
          <path d="M3 6.500h7M3 8.500h7M3 10.500h7" stroke="#7d93ad" />
        </svg>
        <span className="ml-[7px] h-3 w-px bg-[#9a9a9a]" />
        <button aria-label="Salvar" className="ml-[9px]">
          <svg viewBox="0 0 13 13" className="size-[13px]">
            <path d="M.5.5h12v12H.5z" fill="#7d62ad" stroke="#5e4790" />
            <path d="M3 1h7v5H3z" fill="#f4f2f8" />
            <path d="M3 8h7v4.500H3z" fill="#dcd6e8" />
          </svg>
        </button>
        <button aria-label="Desfazer" className="ml-2">
          <svg viewBox="0 0 13 13" className="size-[13px]">
            <path d="M3 4.500h4.500a3.500 3.500 0 0 1 2 6.300L7 12.500" fill="none" stroke="#45a5d8" strokeWidth="2.600" />
            <path d="M0 4.500L5 .5v8z" fill="#45a5d8" />
          </svg>
        </button>
        <button aria-label="Refazer" className="ml-2">
          <svg viewBox="0 0 13 13" className="size-[13px]">
            <path d="M10 4.500H5.500a3.500 3.500 0 0 0-2 6.300L6 12.500" fill="none" stroke="#b6bec6" strokeWidth="2.600" />
            <path d="M13 4.500L8 .5v8z" fill="#b6bec6" />
          </svg>
        </button>
        <button aria-label="Personalizar" className="ml-[7px] flex flex-col items-center gap-[2px]">
          <span className="h-px w-[6px] bg-[#333]" />
          <Caret />
        </button>
        <span className="ml-[7px] h-3 w-px bg-[#9a9a9a]" />
        <h1 className="ml-2 whitespace-nowrap">Documento - WordPad</h1>
        <button aria-label="Minimizar janela" className="ml-auto flex w-[42px] justify-center">
          <span className="h-px w-[9px] bg-[#555]" />
        </button>
        <button aria-label="Maximizar janela" className="mr-2 flex w-[42px] justify-center">
          <span className="size-[10px] border border-[#555]" />
        </button>
      </div>
      <div className="flex h-[21px] shrink-0 pl-px text-[10px] text-[#4a4f52]" role="tablist">
        <button role="tab" className="w-[52px] bg-[#2478bf] font-semibold text-white">Arquivo</button>
        <button role="tab" aria-selected className="ml-px w-[52px] border-x border-[#e3e7e9] bg-[#f4f7f8]">Início</button>
        <button role="tab" className="w-[55px]">Exibir</button>
      </div>
      <Ribbon />
      <div className="flex min-h-0 flex-1 flex-col bg-linear-to-b from-[#c5cde0] to-[#dde5f1] pt-[7px] pr-[70px] pl-[89px]">
        <Ruler />
        <article className="mt-2 min-h-0 flex-1 overflow-hidden bg-white pt-[6px] pl-28 font-['Open_Sans',sans-serif] text-[20px] leading-[43px] text-[#222] shadow-[0_0_4px_#7f8ba3]">
          <p>100.000</p>
          <p>ae criei 1 tabela pra chegar nesses valores</p>
          {rows.map((row) => (
            <p key={row.cells[0]} className={clsx("flex whitespace-nowrap", row.red && "text-[#d0142f]")}>
              {row.cells.map((c, i) => (
                <span key={c} className={row.widths[i]}>{c}</span>
              ))}
            </p>
          ))}
          <span className="mt-2 block h-6 w-px bg-[#222]" />
        </article>
      </div>
      <div className="flex h-[25px] shrink-0 items-center border-t border-[#d9d9d9] bg-[#f0f0f0] text-[11px] text-[#333]">
        <span className="ml-auto h-full w-[29px] border-x border-[#dcdcdc]" />
        <label htmlFor="zoom" className="ml-5">100%</label>
        <button aria-label="Reduzir zoom" className="ml-[6px] flex size-[15px] items-center justify-center rounded-full border border-[#888] bg-white">
          <span className="h-[2px] w-[7px] bg-[#555]" />
        </button>
        <input
          id="zoom"
          type="range"
          defaultValue={50}
          className="mr-[11px] ml-[10px] h-4 w-20 appearance-none bg-[linear-gradient(#d4d4d4,#d4d4d4)] bg-size-[100%_3px] bg-center bg-no-repeat [&::-webkit-slider-thumb]:h-4 [&::-webkit-slider-thumb]:w-[10px] [&::-webkit-slider-thumb]:appearance-none [&::-webkit-slider-thumb]:bg-[#1078d0] [&::-webkit-slider-thumb]:[clip-path:polygon(0_0,100%_0,100%_70%,50%_100%,0_70%)]"
        />
      </div>
    </div>
  );
}

export default function App() {
  return (
    <div className="relative flex min-h-screen flex-col overflow-hidden bg-black pr-1 pb-[2px] pl-[2px] font-['Open_Sans',sans-serif]">
      <TabStrip />
      <Toolbar />
      <BookmarksBar />
      <HotmartPage />
      <DownloadBar />
      <WordPad />
      <p className="absolute bottom-[25px] left-[471px] bg-linear-to-b from-[#16486a] from-30% to-[#67bb9e] to-85% bg-clip-text font-[Roboto,sans-serif] text-2xl leading-7 font-medium text-transparent drop-shadow-[0_0_1px_#031a33]">
        Youtube.com\Rockgametrons
      </p>
    </div>
  );
}
